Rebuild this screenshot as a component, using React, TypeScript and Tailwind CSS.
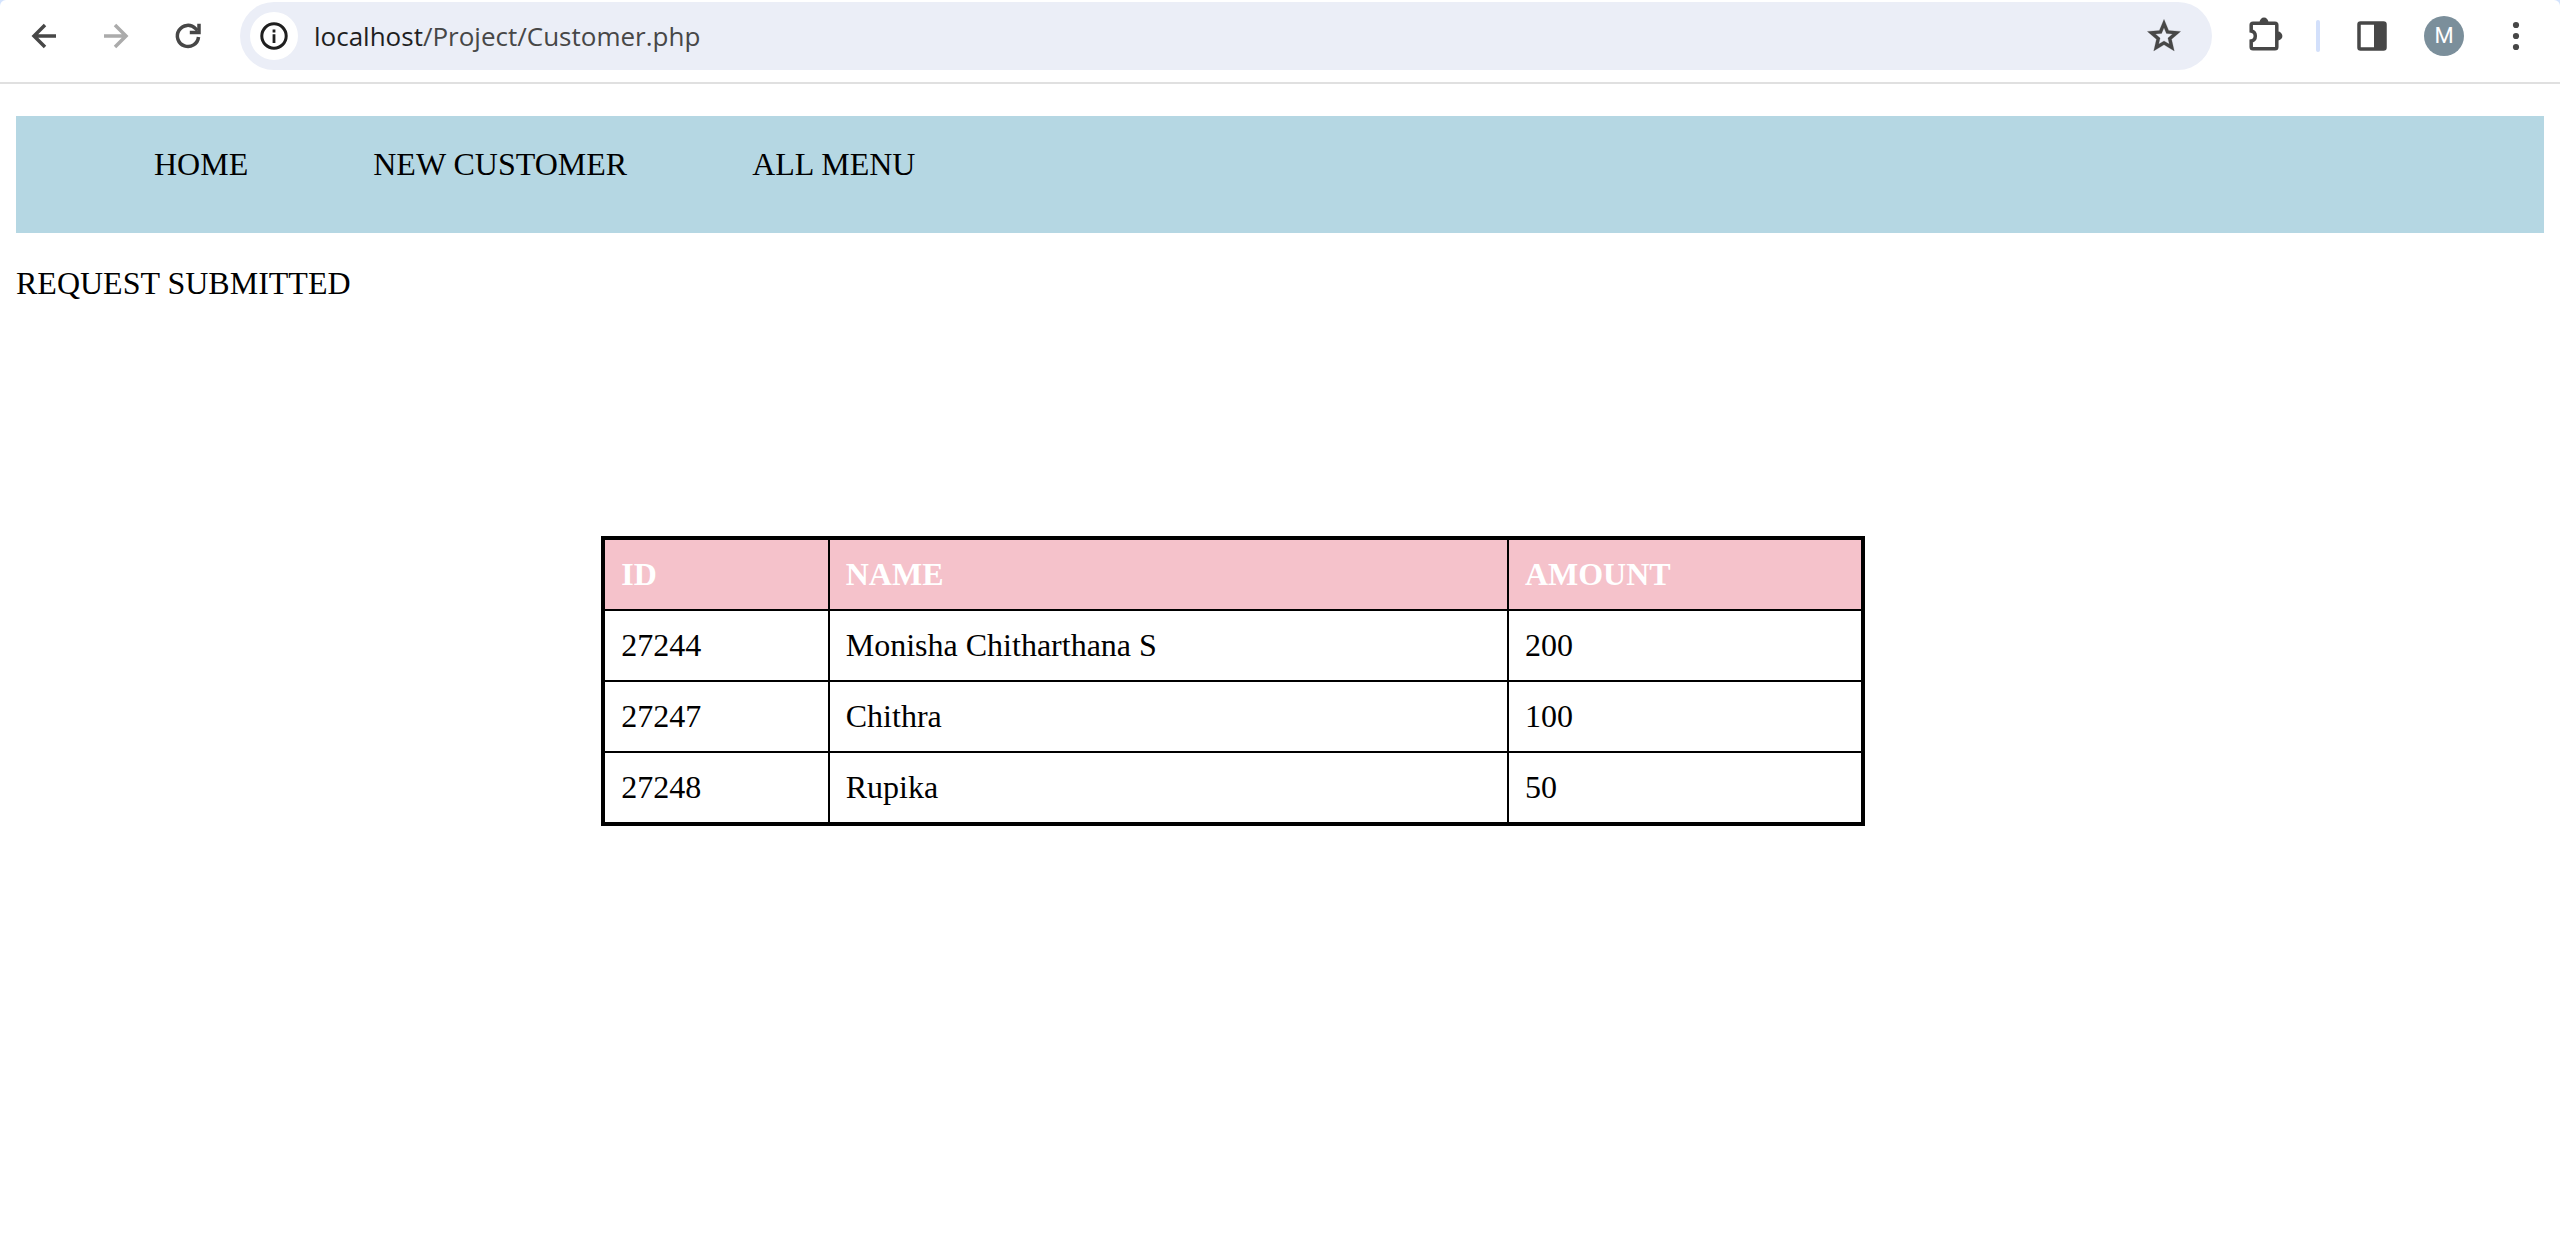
import React from "react";

const customers = [
  { id: "27244", name: "Monisha Chitharthana S", amount: "200" },
  { id: "27247", name: "Chithra", amount: "100" },
  { id: "27248", name: "Rupika", amount: "50" },
];

const links = ["HOME", "NEW CUSTOMER", "ALL MENU"];

function ToolButton({ label, children }: { label: string; children: React.ReactNode }) {
  return (
    <button type="button" aria-label={label} className="flex h-[68px] w-[72px] shrink-0 items-center justify-center">
      {children}
    </button>
  );
}

function BackIcon() {
  return (
    <svg viewBox="0 0 36 36" className="size-9" fill="none" stroke="#474747" strokeWidth="3.5">
      <path d="M30 18H8M19 7 8 18l11 11" />
    </svg>
  );
}

function ForwardIcon() {
  return (
    <svg viewBox="0 0 36 36" className="size-9" fill="none" stroke="#ababab" strokeWidth="3.5">
      <path d="M6 18h22M17 7l11 11-11 11" />
    </svg>
  );
}

function ReloadIcon() {
  return (
    <svg viewBox="0 0 36 36" className="size-9" fill="none" stroke="#474747" strokeWidth="3.5">
      <path d="M28.5 19A10.6 10.6 0 1 1 25.6 10.6L27.5 12.5" />
      <path d="M29 5.8v8.6H19.8" />
    </svg>
  );
}

function InfoIcon() {
  return (
    <svg viewBox="0 0 32 32" className="size-8" fill="none" stroke="#1f1f1f">
      <circle cx="16" cy="16" r="12.2" strokeWidth="3" />
      <path d="M16 14.2v8.8M16 9.4v3" strokeWidth="2.8" />
    </svg>
  );
}

function StarIcon() {
  return (
    <svg viewBox="0 0 24 24" className="size-10" fill="#474747" stroke="#474747" strokeWidth="0.12">
      <path d="m8.85 16.825 3.15-1.9 3.15 1.9-.825-3.6 2.775-2.4-3.65-.325-1.45-3.4-1.45 3.425-3.65.3 2.775 2.425ZM5.825 21l1.625-7.025L2 9.25l7.2-.625L12 2l2.8 6.625 7.2.625-5.45 4.725L18.175 21 12 17.275Z" />
    </svg>
  );
}

function PuzzleIcon() {
  return (
    <svg viewBox="0 0 40 40" className="size-10" fill="none" stroke="#474747" strokeWidth="3.5">
      <path d="M7.2 15V9A1.8 1.8 0 0 1 9 7.2h22A1.8 1.8 0 0 1 32.8 9v22a1.8 1.8 0 0 1-1.8 1.8H9A1.8 1.8 0 0 1 7.2 31v-6c2.6-.5 4.1-2.5 4.1-5s-1.5-4.5-4.1-5z" />
      <path d="M15.6 6a4.4 4.4 0 0 1 8.8 0zM34 15.6a4.4 4.4 0 0 1 0 8.8z" fill="#474747" stroke="none" />
    </svg>
  );
}

function SidePanelIcon() {
  return (
    <svg viewBox="0 0 40 40" className="size-10">
      <rect x="7" y="7" width="26" height="26" rx="1.5" fill="none" stroke="#474747" strokeWidth="3.5" />
      <path d="M22 7h11v26H22z" fill="#474747" />
    </svg>
  );
}

function MoreIcon() {
  return (
    <svg viewBox="0 0 40 40" className="size-10" fill="#474747">
      <circle cx="20" cy="9" r="3.1" />
      <circle cx="20" cy="20" r="3.1" />
      <circle cx="20" cy="31" r="3.1" />
    </svg>
  );
}

function Toolbar() {
  return (
    <header className="bg-[#d3e3fd]">
      <div className="flex items-center rounded-t-md border-b-2 border-[#e0e0e0] bg-white px-2 pt-[2px] pb-3">
        <ToolButton label="Back"><BackIcon /></ToolButton>
        <ToolButton label="Forward"><ForwardIcon /></ToolButton>
        <ToolButton label="Reload"><ReloadIcon /></ToolButton>
        <div className="ml-4 flex h-[68px] min-w-0 flex-1 items-center rounded-full bg-[#ebeef7] pr-7 pl-[10px]">
          <button type="button" aria-label="View site information" className="flex size-12 shrink-0 items-center justify-center rounded-full bg-white">
            <InfoIcon />
          </button>
          <div className="ml-4 min-w-0 flex-1 truncate font-['Open_Sans',sans-serif] text-[26px] leading-9 text-[#474747]">
            <span className="text-[#1f1f1f]">localhost</span>/Project/Customer.php
          </div>
          <button type="button" aria-label="Bookmark this tab" className="shrink-0">
            <StarIcon />
          </button>
        </div>
        <div className="ml-4 flex items-center">
          <ToolButton label="Extensions"><PuzzleIcon /></ToolButton>
          <div className="mx-4 h-8 w-1 rounded-full bg-[#d3e0fb]" />
          <ToolButton label="Side panel"><SidePanelIcon /></ToolButton>
          <ToolButton label="Profile">
            <span className="flex size-10 items-center justify-center rounded-full bg-[#7b8f9b] font-[Roboto,sans-serif] text-[22px] leading-none text-white">M</span>
          </ToolButton>
          <ToolButton label="More"><MoreIcon /></ToolButton>
        </div>
      </div>
    </header>
  );
}

export default function App() {
  return (
    <div className="min-h-screen bg-white">
      <Toolbar />
      <main className="p-4 pt-8 font-['Liberation_Serif',serif] text-[32px] leading-[37px] text-black">
        <nav className="flex gap-[125px] bg-[#b5d7e3] pt-[30px] pb-[50px] pl-[138px]">
          {links.map((link) => (
            <a key={link} href="#">{link}</a>
          ))}
        </nav>
        <p className="mt-8">REQUEST SUBMITTED</p>
        <table className="mt-[234px] ml-[23.15%] w-1/2 table-fixed border-collapse border-4 border-black text-left">
          <colgroup>
            <col className="w-[17.9%]" />
            <col className="w-[53.9%]" />
            <col />
          </colgroup>
          <thead>
            <tr className="bg-[#f5c2cb] text-white">
              <th className="border-2 border-black p-4 font-bold">ID</th>
              <th className="border-2 border-black p-4 font-bold">NAME</th>
              <th className="border-2 border-black p-4 font-bold">AMOUNT</th>
            </tr>
          </thead>
          <tbody>
            {customers.map((c) => (
              <tr key={c.id}>
                <td className="border-2 border-black p-4">{c.id}</td>
                <td className="border-2 border-black p-4">{c.name}</td>
                <td className="border-2 border-black p-4">{c.amount}</td>
              </tr>
            ))}
          </tbody>
        </table>
      </main>
    </div>
  );
}
